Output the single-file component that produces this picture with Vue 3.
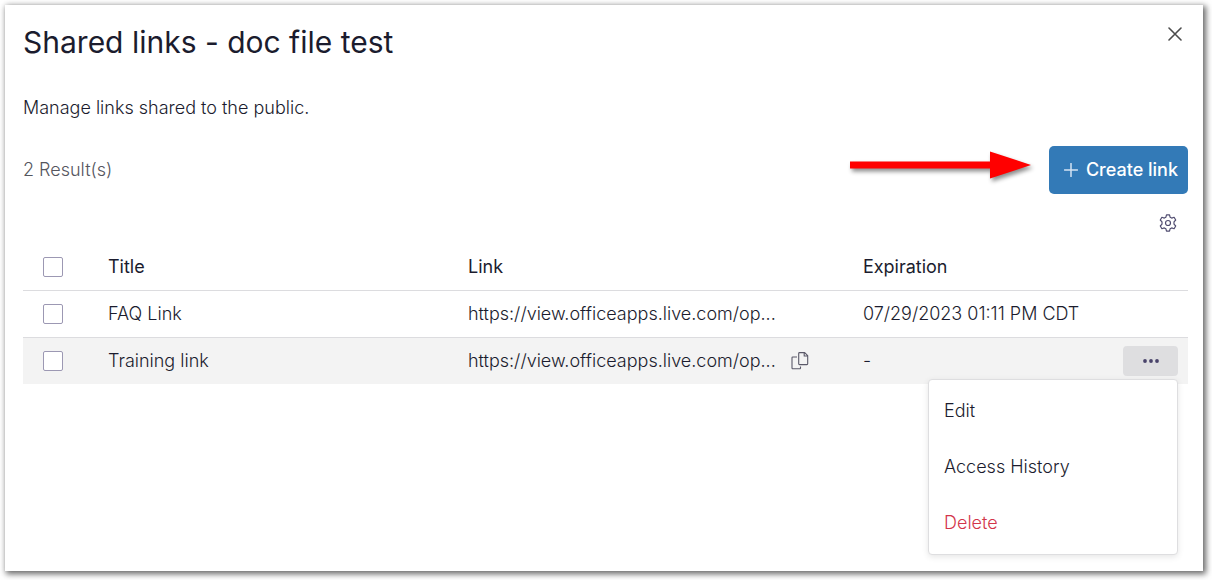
<script setup>
import { ref } from 'vue'

const links = ref([
  { id: 1, title: 'FAQ Link', url: 'https://view.officeapps.live.com/op...', expiration: '07/29/2023 01:11 PM CDT', selected: false, active: false },
  { id: 2, title: 'Training link', url: 'https://view.officeapps.live.com/op...', expiration: '-', selected: false, active: true }
])
const allSelected = ref(false)
function toggleAll() {
  links.value.forEach((l) => { l.selected = allSelected.value })
}
</script>

<template>
  <main class="panel">
    <header class="head">
      <h1>Shared links - doc file test</h1>
      <button class="icon-btn close" type="button" aria-label="Close">
        <svg width="14" height="14" viewBox="0 0 14 14" fill="none" stroke="#4c4c4c" stroke-width="1.6" stroke-linecap="round"><path d="M1 1l12 12M13 1L1 13" /></svg>
      </button>
    </header>

    <p class="intro">Manage links shared to the public.</p>

    <div class="toolbar">
      <span class="count">{{ links.length }} Result(s)</span>
      <svg class="arrow" width="188" height="46" viewBox="0 0 188 46" aria-hidden="true">
        <path d="M1 14.500h140V4.500L182 18L141 31.500V21.500H1z" fill="#f00" />
      </svg>
      <button class="create" type="button">
        <svg width="14" height="14" viewBox="0 0 14 14" fill="none" stroke="#d5e3f3" stroke-width="1.500" stroke-linecap="round"><path d="M7 .5v13M.5 7h13" /></svg>
        Create link
      </button>
    </div>

    <div class="settings">
      <button class="icon-btn" type="button" aria-label="Table settings">
        <svg width="18" height="18" viewBox="0 0 18 18" fill="none" stroke="#504c70" stroke-width="1.200" stroke-linejoin="round">
          <path d="M7.500 .8h3l.6 2.400 1.600.9 2.400-.8 1.600 2.700L15 7.800v2.400l1.700 1.800-1.600 2.700-2.400-.8-1.600.9-.6 2.400h-3l-.6-2.400-1.600-.9-2.400.8L1.300 12 3 10.200V7.800L1.300 6l1.600-2.700 2.400.8 1.600-.9z" />
          <circle cx="9" cy="9" r="2.500" />
        </svg>
      </button>
    </div>

    <table>
      <colgroup>
        <col class="c-check"><col class="c-title"><col class="c-link"><col>
      </colgroup>
      <thead>
        <tr>
          <th class="check"><input v-model="allSelected" type="checkbox" aria-label="Select all" @change="toggleAll"></th>
          <th>Title</th>
          <th>Link</th>
          <th>Expiration</th>
        </tr>
      </thead>
      <tbody>
        <tr v-for="link in links" :key="link.id" :class="{ active: link.active }">
          <td class="check"><input v-model="link.selected" type="checkbox" :aria-label="'Select ' + link.title"></td>
          <td>{{ link.title }}</td>
          <td>
            <div class="cell">
              <span>{{ link.url }}</span>
              <button v-if="link.active" class="icon-btn" type="button" aria-label="Copy link">
                <svg width="18" height="18" viewBox="0 0 18 18" fill="none" stroke="#5a5868" stroke-width="1.100" stroke-linejoin="round">
                  <path d="M8.500 .6h5.200l3 3v8.200a.8.8 0 0 1-.8.800H8.500a.8.8 0 0 1-.8-.8V1.400a.8.8 0 0 1 .8-.8zM13.200 .6V4h3.500" />
                  <path d="M6 5H1.800a.8.8 0 0 0-.8.800v10.200a.8.8 0 0 0 .8.800h6.900a.8.8 0 0 0 .8-.8V14.500" />
                </svg>
              </button>
            </div>
          </td>
          <td>
            <div class="cell spread">
              <span>{{ link.expiration }}</span>
              <div v-if="link.active" class="actions">
                <button class="more" type="button" aria-label="More actions" aria-expanded="true">
                  <svg width="18" height="4" viewBox="0 0 18 4" fill="#49436a"><circle cx="3" cy="2" r="1.900" /><circle cx="9" cy="2" r="1.900" /><circle cx="15" cy="2" r="1.900" /></svg>
                </button>
                <div class="menu">
                  <button type="button">Edit</button>
                  <button type="button">Access History</button>
                  <button type="button" class="danger">Delete</button>
                </div>
              </div>
            </div>
          </td>
        </tr>
      </tbody>
    </table>
  </main>
</template>

<style>
body { background: #fff; }
</style>

<style scoped>
* { box-sizing: border-box; }
.panel {
  display: flow-root;
  margin: 5px 9px 9px 5px;
  min-height: calc(100vh - 14px);
  padding: 16px 15px 16px 18px;
  background: #fff;
  box-shadow: 2px 2px 6px 1px rgba(0, 0, 0, 0.6);
  color: #1b1c2e;
  font: 300 18px/24px Inter, "Liberation Sans", sans-serif;
}
button {
  font: inherit;
  color: inherit;
  border: 0;
  background: none;
  padding: 0;
  cursor: pointer;
}
.icon-btn { display: flex; }
.head { display: flex; justify-content: space-between; align-items: flex-start; }
h1 { margin: 0; font-size: 30px; line-height: 42px; font-weight: 400; }
.close { padding: 6px 6px; }
.intro { margin: 33px 0 26px; }
.toolbar { display: flex; align-items: center; }
.count { color: #55565e; }
.arrow { margin-left: auto; margin-right: 12px; filter: drop-shadow(2px 3px 2px rgba(0, 0, 0, 0.45)); }
.create {
  display: flex;
  align-items: center;
  gap: 8px;
  height: 48px;
  padding: 0 10px 0 15px;
  border-radius: 5px;
  background: #337ab7;
  color: #fff;
  font-weight: 500;
}
.settings { display: flex; justify-content: flex-end; padding: 20px 11px; height: 50px; }
table { width: 100%; table-layout: fixed; border-collapse: separate; border-spacing: 0; }
.c-check { width: 69px; }
.c-title { width: 30.9%; }
.c-link { width: 33.9%; }
th, td { height: 47px; padding: 0 16px; text-align: left; border-bottom: 1px solid #dcdcdf; }
th { font-weight: 400; }
.check { padding-left: 20px; }
.active td { height: 46px; border-bottom: 0; background: #f3f3f3; }
.active td:last-child { padding-right: 10px; }
input {
  appearance: none;
  display: block;
  width: 20px;
  height: 20px;
  margin: 0;
  border: 1px solid #9c98b3;
  border-radius: 2px;
  background: #fff;
}
input:checked { background: #337ab7; }
.cell { display: flex; align-items: center; gap: 15px; }
.spread { justify-content: space-between; }
.actions { position: relative; }
.more {
  display: flex;
  align-items: center;
  justify-content: center;
  width: 55px;
  height: 30px;
  border-radius: 4px;
  background: #dedee0;
}
.menu {
  position: absolute;
  top: 33px;
  right: 0;
  width: 250px;
  padding: 3px 0;
  border: 1px solid #dedee0;
  border-radius: 4px;
  background: #fff;
  box-shadow: 0 2px 6px rgba(0, 0, 0, 0.1);
}
.menu button { display: block; width: 100%; height: 56px; padding: 0 15px; text-align: left; }
.menu .danger { color: #d3354a; }
</style>
